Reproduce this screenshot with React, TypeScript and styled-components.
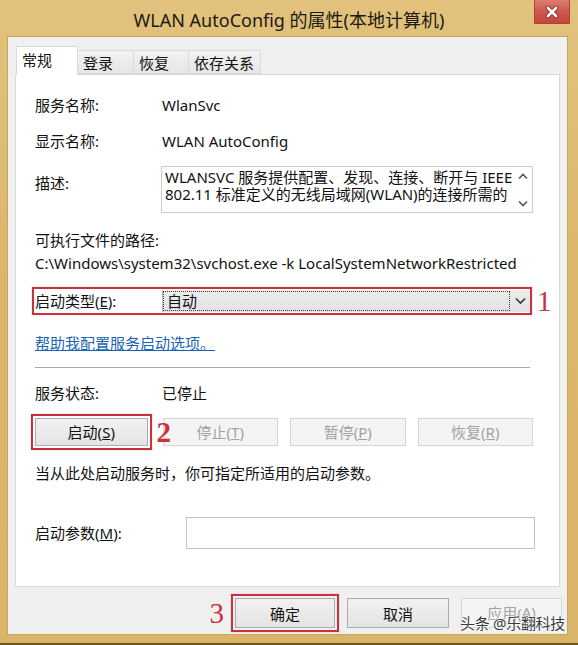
import React from "react";
import styled, { createGlobalStyle } from "styled-components";

const UI_FONT = `"Noto Sans", "Noto Sans CJK SC", sans-serif`;
const MARK_RED = "#c8323c";

const GlobalStyle = createGlobalStyle`
  html, body {
    margin: 0;
    padding: 0;
    background: #fff;
  }
  body {
    font-family: ${UI_FONT};
  }
`;

// Window chrome

const Window = styled.div`
  position: relative;
  width: 578px;
  height: 645px;
  box-sizing: border-box;
  display: flex;
  flex-direction: column;
  background: linear-gradient(180deg, #e2c27c 0%, #dbb76c 40%, #d9b469 100%);
  border-bottom: 2px solid #6e5622;
  font-family: ${UI_FONT};
  color: #111;
  overflow: hidden;
`;

const TitleBar = styled.div`
  flex: none;
  height: 36px;
  display: grid;
  grid-template-columns: 1fr auto 1fr;
  align-items: start;
`;

const Title = styled.div`
  grid-column: 2;
  align-self: center;
  padding-top: 2px;
  font-size: 18px;
  color: #1c1a14;
  white-space: nowrap;
`;

const CloseButton = styled.div`
  grid-column: 3;
  justify-self: end;
  margin-right: 8px;
  width: 36px;
  height: 24px;
  box-sizing: border-box;
  border: 1px solid #a4443d;
  border-top: none;
  background: linear-gradient(180deg, #de7d75 0%, #cc544c 55%, #c2473f 100%);
  display: flex;
  align-items: center;
  justify-content: center;
`;

const Body = styled.div`
  flex: 1;
  margin: 0 10px 8px 7px;
  box-sizing: border-box;
  background: #f0f0f0;
  border: 1px solid #c6a55d;
  padding: 9px 5px 6px 7px;
  display: flex;
  flex-direction: column;
`;

// Tabs

const TabStrip = styled.div`
  position: relative;
  z-index: 1;
  flex: none;
  height: 28px;
  padding-left: 2px;
  display: flex;
  align-items: flex-end;
`;

const Tab = styled.div<{ $active?: boolean; $w: number }>`
  width: ${(p) => p.$w}px;
  height: ${(p) => (p.$active ? 29 : 24)}px;
  margin-left: -1px;
  margin-bottom: ${(p) => (p.$active ? -1 : 0)}px;
  box-sizing: border-box;
  padding: 0 5px ${(p) => (p.$active ? 3 : 0)}px;
  border: 1px solid #d9d9d9;
  border-bottom: ${(p) => (p.$active ? "none" : "1px solid #d9d9d9")};
  background: ${(p) => (p.$active ? "#fff" : "linear-gradient(180deg, #f2f2f2, #e6e6e6)")};
  display: flex;
  align-items: center;
  font-size: 15px;
  white-space: nowrap;
`;

const Panel = styled.div`
  flex: 1;
  margin-right: 2px;
  background: #fff;
  border: 1px solid #d9d9d9;
  padding: 0 26px 0 19px;
  display: flex;
  flex-direction: column;
  font-size: 15px;
  line-height: 20px;
`;

// Panel rows

const Row = styled.div<{ $mt: number; $label?: number; $top?: boolean }>`
  margin-top: ${(p) => p.$mt}px;
  display: grid;
  grid-template-columns: ${(p) => p.$label ?? 127}px 1fr;
  align-items: ${(p) => (p.$top ? "start" : "center")};
`;

const Line = styled.div<{ $mt: number }>`
  margin-top: ${(p) => p.$mt}px;
  white-space: nowrap;
`;

const DescLabel = styled.div`
  padding-top: 7px;
`;

const DescBox = styled.div`
  margin-left: -1px;
  height: 47px;
  box-sizing: border-box;
  border: 1px solid #cdcdcd;
  display: grid;
  grid-template-columns: 1fr 18px;
  overflow: hidden;
`;

const DescText = styled.div`
  padding: 2px 3px 0;
  line-height: 17px;
  white-space: nowrap;
  overflow: hidden;
`;

const ScrollCol = styled.div`
  display: flex;
  flex-direction: column;
  justify-content: space-between;
  align-items: center;
  padding: 6px 0 5px;
`;

const RedBox = styled.div<{ $m?: string; $pad?: string }>`
  position: relative;
  margin: ${(p) => p.$m ?? "0"};
  padding: ${(p) => p.$pad ?? "2px"};
  border: 2px solid ${MARK_RED};
  box-shadow: 0 0 1px 0 rgba(200, 50, 60, 0.5);
`;

const StartupBox = styled(RedBox)`
  width: 500px;
  height: 28px;
  box-sizing: border-box;
  display: grid;
  grid-template-columns: 127px 1fr;
  align-items: center;
`;

const Combo = styled.div`
  height: 22px;
  box-sizing: border-box;
  background: linear-gradient(180deg, #ececec, #e2e2e2);
  border-left: 1px solid #b8b8b8;
  display: grid;
  grid-template-columns: 1fr 20px;
  align-items: center;
`;

const FocusRect = styled.div`
  height: 20px;
  box-sizing: border-box;
  border: 1px dotted #3c3c3c;
  padding-left: 3px;
  display: flex;
  align-items: center;
`;

const ComboArrow = styled.div`
  display: flex;
  justify-content: center;
  align-items: center;
`;

const Mark = styled.span<{ $side: "left" | "right"; $bold?: boolean }>`
  position: absolute;
  top: 50%;
  transform: translateY(-50%);
  ${(p) => (p.$side === "right" ? "left: calc(100% + 7px);" : "right: calc(100% + 9px);")}
  font-family: "Liberation Serif", serif;
  font-size: 29px;
  font-weight: ${(p) => (p.$bold ? 700 : 400)};
  line-height: 1;
  color: ${MARK_RED};
`;

const HelpLink = styled.a`
  color: #1b63b3;
  text-decoration: underline;
  cursor: pointer;
`;

const Separator = styled.div<{ $mt: number }>`
  margin-top: ${(p) => p.$mt}px;
  margin-right: 3px;
  height: 1px;
  background: #a6a6a6;
`;

const ActionGrid = styled.div<{ $mt: number }>`
  margin-top: ${(p) => p.$mt}px;
  display: grid;
  grid-template-columns: repeat(4, 1fr);
  column-gap: 12px;
`;

const Button = styled.div<{ $disabled?: boolean; $w?: number; $h?: number }>`
  ${(p) => (p.$w ? `width: ${p.$w}px;` : "")}
  height: ${(p) => p.$h ?? 28}px;
  box-sizing: border-box;
  border: 1px solid ${(p) => (p.$disabled ? "#d6d6d6" : "#acacac")};
  background: ${(p) => (p.$disabled ? "#f4f4f4" : "linear-gradient(180deg, #f1f1f1, #e4e4e4)")};
  color: ${(p) => (p.$disabled ? "#a2a2a2" : "#111")};
  display: flex;
  align-items: center;
  justify-content: center;
  font-size: 15px;
  white-space: nowrap;
`;

const FooterButton = styled(Button)`
  align-items: flex-start;
  padding-top: 3px;
`;

const ParamInput = styled.div`
  height: 32px;
  margin-right: -2px;
  box-sizing: border-box;
  border: 1px solid #c4c4c4;
  background: #fff;
`;

const Footer = styled.div`
  flex: none;
  margin-top: 11px;
  height: 30px;
  display: flex;
  justify-content: flex-end;
  align-items: center;
  gap: 12px;
`;

const Watermark = styled.div`
  position: absolute;
  right: 13px;
  bottom: 12px;
  font-size: 15px;
  line-height: 16px;
  color: #3a3a3a;
  letter-spacing: -0.3px;
  text-shadow: 0 0 2px #fff, 0 0 2px #fff, 0 0 3px #fff;
  white-space: nowrap;
`;

// Small drawings

const CloseGlyph = () => (
  <svg width="14" height="12" viewBox="0 0 14 12">
    <path d="M3 2 L11 10 M11 2 L3 10" stroke="#7d2b26" strokeWidth="4.4" strokeLinecap="round" />
    <path d="M3 2 L11 10 M11 2 L3 10" stroke="#fff" strokeWidth="2.6" strokeLinecap="round" />
  </svg>
);

const Chevron = ({ up, color = "#555", w = 8 }: { up?: boolean; color?: string; w?: number }) => (
  <svg width={w + 2} height={w / 2 + 3} viewBox={`0 0 ${w + 2} ${w / 2 + 3}`}>
    <path
      d={up ? `M1 ${w / 2 + 1.5} L${w / 2 + 1} 1.5 L${w + 1} ${w / 2 + 1.5}` : `M1 1.5 L${w / 2 + 1} ${w / 2 + 1.5} L${w + 1} 1.5`}
      stroke={color}
      strokeWidth="1.6"
      fill="none"
    />
  </svg>
);

const App: React.FC = () => {
  return (
    <Window>
      <GlobalStyle />
      <TitleBar>
        <Title>WLAN AutoConfig 的属性(本地计算机)</Title>
        <CloseButton>
          <CloseGlyph />
        </CloseButton>
      </TitleBar>

      <Body>
        <TabStrip>
          <Tab $active $w={62}>常规</Tab>
          <Tab $w={57}>登录</Tab>
          <Tab $w={56}>恢复</Tab>
          <Tab $w={73}>依存关系</Tab>
        </TabStrip>

        <Panel>
          <Row $mt={20}>
            <span>服务名称:</span>
            <span>WlanSvc</span>
          </Row>
          <Row $mt={16}>
            <span>显示名称:</span>
            <span>WLAN AutoConfig</span>
          </Row>
          <Row $mt={15} $top>
            <DescLabel>描述:</DescLabel>
            <DescBox>
              <DescText>
                WLANSVC 服务提供配置、发现、连接、断开与 IEEE
                <br />
                802.11 标准定义的无线局域网(WLAN)的连接所需的
              </DescText>
              <ScrollCol>
                <Chevron up />
                <Chevron />
              </ScrollCol>
            </DescBox>
          </Row>

          <Line $mt={17}>可执行文件的路径:</Line>
          <Line $mt={3}>{"C:\\Windows\\system32\\svchost.exe -k LocalSystemNetworkRestricted"}</Line>

          <StartupBox $m="14px 0 0 -3px" $pad="1px 0 1px 1px">
            <span>
              启动类型(<u>E</u>):
            </span>
            <Combo>
              <FocusRect>自动</FocusRect>
              <ComboArrow>
                <Chevron color="#333" w={9} />
              </ComboArrow>
            </Combo>
            <Mark $side="right">1</Mark>
          </StartupBox>

          <Line $mt={18}>
            <HelpLink>帮助我配置服务启动选项。</HelpLink>
          </Line>

          <Separator $mt={14} />

          <Row $mt={15}>
            <span>服务状态:</span>
            <span>已停止</span>
          </Row>

          <ActionGrid $mt={15}>
            <RedBox $m="-4px -1px -4px -4px">
              <Button>
                启动(<u>S</u>)
              </Button>
              <Mark $side="right" $bold>2</Mark>
            </RedBox>
            <Button $disabled>
              停止(<u>T</u>)
            </Button>
            <Button $disabled>
              暂停(<u>P</u>)
            </Button>
            <Button $disabled>
              恢复(<u>R</u>)
            </Button>
          </ActionGrid>

          <Line $mt={17}>当从此处启动服务时，你可指定所适用的启动参数。</Line>

          <Row $mt={34} $label={151}>
            <span>
              启动参数(<u>M</u>):
            </span>
            <ParamInput />
          </Row>
        </Panel>

        <Footer>
          <RedBox $m="-4px">
            <Button $w={100} $h={30}>确定</Button>
            <Mark $side="left">3</Mark>
          </RedBox>
          <Button $w={102} $h={30}>取消</Button>
          <FooterButton $w={101} $h={30} $disabled>
            应用(<u>A</u>)
          </FooterButton>
        </Footer>
      </Body>

      <Watermark>头条 @乐翻科技</Watermark>
    </Window>
  );
};

export default App;
